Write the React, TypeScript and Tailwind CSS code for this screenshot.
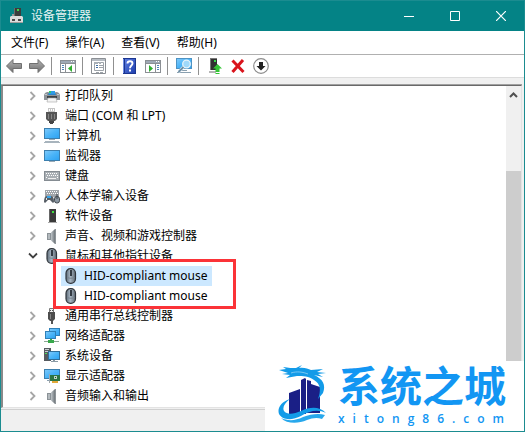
import type { ReactNode } from "react";

function Svg({ children, w = 16, h = 16 }: { children: ReactNode; w?: number; h?: number }) {
  return (
    <svg width={w} height={h} viewBox={`0 0 ${w} ${h}`} className="block shrink-0" aria-hidden="true">
      {children}
    </svg>
  );
}

const Chevron = ({ open }: { open?: boolean }) => (
  <Svg w={10} h={10}>
    {open ? (
      <path d="M1 2.5 5 6.5 9 2.5" fill="none" stroke="#404040" strokeWidth="1.8" />
    ) : (
      <path d="M2.5 1 6.5 5 2.5 9" fill="none" stroke="#a6a6a6" strokeWidth="1.8" />
    )}
  </Svg>
);

const Defs = () => (
  <svg width="0" height="0" className="absolute" aria-hidden="true">
    <defs>
      <linearGradient id="screen" x1="0" y1="0" x2="1" y2="1">
        <stop offset="0" stopColor="#7cc8fa" />
        <stop offset="0.5" stopColor="#4ab4f8" />
        <stop offset="1" stopColor="#2ea3f2" />
      </linearGradient>
      <linearGradient id="arrow" x1="0" y1="0" x2="0" y2="1">
        <stop offset="0" stopColor="#b5b5b5" />
        <stop offset="1" stopColor="#6e6e6e" />
      </linearGradient>
      <linearGradient id="metal" x1="0" y1="0" x2="1" y2="0">
        <stop offset="0" stopColor="#5d6a76" />
        <stop offset="0.45" stopColor="#a9b7c4" />
        <stop offset="1" stopColor="#5f6a74" />
      </linearGradient>
      <linearGradient id="cone" x1="0" y1="0" x2="1" y2="0">
        <stop offset="0" stopColor="#bfc5c9" />
        <stop offset="1" stopColor="#70777c" />
      </linearGradient>
      <linearGradient id="help" x1="0" y1="0" x2="1" y2="1">
        <stop offset="0" stopColor="#5a7be0" />
        <stop offset="1" stopColor="#1f3fae" />
      </linearGradient>
    </defs>
  </svg>
);

const AppIcon = () => (
  <Svg w={14} h={16}>
    <path d="M5 0h7v9H5z" fill="#3c3c3c" />
    <path d="M5 0h1v9H5z" fill="#6b6b6b" />
    <path d="M8 1h2v2H8z" fill="#3ddb4a" />
    <path d="M3 6h2v2H3z" fill="#9a9a9a" />
    <path d="M1 9l1-1h11l1 1v6H1z" fill="#dcdcdc" />
    <path d="M1 14h13v1H1z" fill="#9d9d9d" />
    <path d="M3 11h3v2H3zM9 11h3v2H9z" fill="#4a4a4a" />
  </Svg>
);

const ArrowIcon = ({ right }: { right?: boolean }) => (
  <Svg>
    <path
      d={right ? "M15.5 8 9 1.5v4H.5v5H9v4z" : "M.5 8 7 1.5v4h8.500v5H7v4z"}
      fill="url(#arrow)"
      stroke="#707070"
      strokeWidth="1"
      strokeLinejoin="round"
    />
  </Svg>
);

const PaneIcon = ({ right }: { right?: boolean }) => (
  <Svg>
    <path d="M0 2h16v13H0z" fill="#8b8f94" />
    <path d="M1 3h14v2H1z" fill="#9fa9b5" />
    <path d="M11 3h1v1h-1zM13 3h1v1h-1z" fill="#fff" />
    <path d="M1 6h14v8H1z" fill="#fff" />
    <path d={right ? "M10 6h1v8h-1z" : "M5 6h1v8H5z"} fill="#8b8f94" />
    <path d={right ? "M12 7h2v1h-2zm0 2h2v1h-2zm0 2h2v1h-2z" : "M2 7h2v1H2zm0 2h2v1H2zm0 2h2v1H2z"} fill="#4f84b8" />
    <path d={right ? "M4 7v7l4-3.500z" : "M12 7v7L8 10.500z"} fill="#2fae2f" />
  </Svg>
);

const PropertiesIcon = () => (
  <Svg>
    <path d="M.5.5h14v15H.5z" fill="#fff" stroke="#8b8f94" />
    <path d="M1 1h13v2H1z" fill="#b6bcc3" />
    <path d="M3.500 4.500h9v8h-9z" fill="#fff" stroke="#9da3a9" />
    <path d="M3 4h4v2H3zM8 4h2v2H8z" fill="#a8afb6" />
    <path d="M5 7h2v1H5zM5 9h2v1H5z" fill="#3f6ea5" />
    <path d="M8 7h4v1H8zM8 9h4v1H8z" fill="#9da3a9" />
    <path d="M5 14h3v1H5zM9 14h3v1H9z" fill="#9da3a9" />
  </Svg>
);

const HelpIcon = () => (
  <Svg>
    <path d="M1 0h13v16H1z" fill="#1b3690" />
    <path d="M3 1h10v14H3z" fill="url(#help)" />
    <path d="M1 1h1v14H1z" fill="#6f8be0" />
    <path d="M5.500 5.500C5.500 2.500 10.500 2.500 10.500 5.500 10.500 7.500 8 7.500 8 10.200" fill="none" stroke="#fff" strokeWidth="1.900" />
    <path d="M7 11.500h2v2H7z" fill="#fff" />
  </Svg>
);

const ScanIcon = () => (
  <Svg>
    <path d="M0 0h16v11H0z" fill="#4d93c4" />
    <path d="M1 1h14v9H1z" fill="url(#screen)" />
    <path d="M5 12h6v1H5zM1 14h14v1H1z" fill="#8aa0b0" />
    <circle cx="10.500" cy="6" r="3.800" fill="#9fd8fa" stroke="#e7f3fa" strokeWidth="1.300" />
    <path d="m7.500 9-5 5" stroke="#e7f3fa" strokeWidth="3" />
    <path d="m7.500 9-5 5" stroke="#6f8ea4" strokeWidth="1.800" />
  </Svg>
);

const UpdateIcon = () => (
  <Svg>
    <path d="M3 0h7v12H3z" fill="#303030" />
    <path d="M3 0h1v12H3zM3 0h7v1H3z" fill="#777" />
    <path d="M7 2h2v2H7z" fill="#38d648" />
    <path d="M2 13h7v2H2z" fill="#b5b5b5" />
    <path d="M10.500 6 6 10.500h2.500V13h4v-2.500H15z" fill="#35c435" />
    <path d="M8.500 13h4v1h-4zM8.500 15h4v1h-4z" fill="#35c435" />
  </Svg>
);

const RemoveIcon = () => (
  <Svg>
    <path d="M2.500 2.500 13.500 14M13 2 2.500 14" stroke="#d9141c" strokeWidth="3" fill="none" />
  </Svg>
);

const DisableIcon = () => (
  <Svg>
    <circle cx="8" cy="8" r="7.300" fill="#fff" stroke="#8c8c8c" strokeWidth="1.200" />
    <path d="M6 4h4v4h2.500L8 12.500 3.500 8H6z" fill="#222" />
  </Svg>
);

const Printer = () => (
  <Svg>
    <path d="M3 5h10v4H3z" fill="#2d86c8" />
    <path d="M5 3h6v3H5z" fill="#2d9be8" />
    <path d="M5 3h2v2H5z" fill="#35c768" />
    <path d="m1 5 2-1h2L4 7h8l-1-3h2l2 1 1 2v5H0V7z" fill="#8d9398" />
    <path d="M1 6h2v1H1zM13 6h2v1h-2z" fill="#c4c9cd" />
    <path d="M3 8h10v2H3z" fill="#3d4246" />
    <path d="M4 10h8l1 4H3z" fill="#f4f4f4" stroke="#a6a6a6" strokeWidth=".6" />
  </Svg>
);

const Port = () => (
  <Svg>
    <path d="M2 4h11v7l-2 2H4l-2-2z" fill="#555" />
    <path d="M4 0h7v4H4z" fill="#c4c4c4" />
    <path d="M5 1h1v2H5zM7 1h1v2H7zM9 1h1v2H9z" fill="#fff" />
    <path d="M4 6h1v5H4zM7 6h1v5H7zM10 6h1v5h-1z" fill="#858585" />
    <path d="M5 13h5v2H5zM6 15h3v1H6z" fill="#454545" />
  </Svg>
);

const Monitor = ({ base }: { base?: boolean }) => (
  <Svg>
    <g transform={base ? "" : "translate(0 2)"}>
      <path d="M0 0h16v11H0z" fill="#3c7fae" />
      <path d="M1 1h14v9H1z" fill="url(#screen)" />
      <path d="M5 11h6v1H5z" fill="#9aaab6" />
    </g>
    {base && <path d="M1 13h14v1H1zM0 14h16v1H0z" fill="#a8b4bd" />}
  </Svg>
);

const Keyboard = () => (
  <Svg>
    <path d="M0 3h16v10H0z" fill="#858c92" />
    <path d="M1 4h14v8H1z" fill="#a9afb4" />
    <path d="M2 5.500h12M3 7.500h11M2 9.500h1M13 9.500h1" stroke="#fff" strokeDasharray="1 1" />
    <path d="M4 10.500h8" stroke="#eee" />
  </Svg>
);

const Hid = () => (
  <Svg>
    <path d="M1 2h14v7H1z" fill="#a0a5aa" />
    <path d="M2 3.500h12M3 5.500h11" stroke="#fff" strokeDasharray="1 1" />
    <path d="M0 14c0-4 1-6 3-6l2 1 2-1c2 0 3 2 3 6l-1 1-3-3H4l-3 3z" fill="#555d65" />
    <path d="M3 8h4v2H3z" fill="#38a4e8" />
    <path d="M2 10h1v2H2z" fill="#dce3e8" />
    <rect x="10.500" y="8.500" width="5" height="6.500" rx="2.300" fill="#8b97a2" stroke="#3f464d" />
    <path d="M12.500 6h1v5h-1z" fill="#3f464d" />
  </Svg>
);

const Software = () => (
  <Svg>
    <path d="M5 1h7v13H5z" fill="#3a3a3a" />
    <path d="M5 1h1v13H5z" fill="#666" />
    <path d="M8 3h2v2H8z" fill="#3fe03f" />
    <path d="M4 14h9v1H4z" fill="#a9a9a9" />
  </Svg>
);

const Speaker = () => (
  <Svg>
    <path d="M3 5h4v7H3z" fill="#8b9297" />
    <path d="M4 6h2v5H4z" fill="#b4babe" />
    <path d="M7 4.500 11 1v15l-4-3.500z" fill="url(#cone)" />
    <path d="M11 1h1v15h-1z" fill="#8e9498" />
  </Svg>
);

const Mouse = () => (
  <Svg>
    <rect x="3" y=".7" width="9.500" height="14.600" rx="4.500" fill="url(#metal)" stroke="#30363c" strokeWidth="1.200" />
    <path d="M7 2h2v6H7z" fill="#333b43" />
    <path d="M4.500 9.500c2 1 5 1 7 0" fill="none" stroke="#79858f" />
  </Svg>
);

const Usb = () => (
  <Svg>
    <path d="M5.500 0.500h4v4h-4z" fill="#f0f0f0" stroke="#777" />
    <path d="M6 2h1v1H6zM8 2h1v1H8z" fill="#555" />
    <path d="M4 4h7v7l-2 2H6l-2-2z" fill="#4d4d4d" />
    <path d="M6 6h1v5H6z" fill="#858585" />
    <path d="M7 13h2v3H7z" fill="#555" />
  </Svg>
);

const Network = () => (
  <Svg>
    <path d="M5 0h11v8H5z" fill="#2f80b8" />
    <path d="M6 1h9v6H6z" fill="url(#screen)" />
    <path d="M1 3h11v8H1z" fill="#2f80b8" />
    <path d="M2 4h9v6H2z" fill="url(#screen)" />
    <path d="M0 13h15v1H0z" fill="#8ca694" />
    <path d="M6 11h2v2H6zM4 12h6v3H4z" fill="#37a84a" />
  </Svg>
);

const System = () => (
  <Svg>
    <path d="M0 0h7v13H0z" fill="#565b60" />
    <path d="M1 1h4v1H1zM1 3h4v1H1z" fill="#c7cccf" />
    <path d="M1 5h2v1H1z" fill="#4dd85a" />
    <path d="M4 3h12v9H4z" fill="#2f6e9a" />
    <path d="M5 4h10v7H5z" fill="url(#screen)" />
    <path d="M9 12h2v1H9zM7 13h7v1H7z" fill="#8b9ba6" />
  </Svg>
);

const Display = () => (
  <Svg>
    <path d="M0 1h16v10H0z" fill="#3c7fae" />
    <path d="M1 2h14v8H1z" fill="url(#screen)" />
    <path d="M3 12h3v1H3z" fill="#8aa0b0" />
    <path d="M6 7h10v6H6z" fill="#2c7544" />
    <path d="M10 8h3v3h-3z" fill="#bcd6c4" />
    <path d="M11 9h1v1h-1z" fill="#24472f" />
    <path d="M5 6h1v9H5z" fill="#9ea6aa" />
    <path d="M8 13h6v2H8z" fill="#e2a93a" />
  </Svg>
);

type Device = { name: string; icon: ReactNode; children?: string[] };

const devices: Device[] = [
  { name: "打印队列", icon: <Printer /> },
  { name: "端口 (COM 和 LPT)", icon: <Port /> },
  { name: "计算机", icon: <Monitor base /> },
  { name: "监视器", icon: <Monitor /> },
  { name: "键盘", icon: <Keyboard /> },
  { name: "人体学输入设备", icon: <Hid /> },
  { name: "软件设备", icon: <Software /> },
  { name: "声音、视频和游戏控制器", icon: <Speaker /> },
  { name: "鼠标和其他指针设备", icon: <Mouse />, children: ["HID-compliant mouse", "HID-compliant mouse"] },
  { name: "通用串行总线控制器", icon: <Usb /> },
  { name: "网络适配器", icon: <Network /> },
  { name: "系统设备", icon: <System /> },
  { name: "显示适配器", icon: <Display /> },
  { name: "音频输入和输出", icon: <Speaker /> },
];

const toolGroups: { label: string; icon: ReactNode }[][] = [
  [
    { label: "后退", icon: <ArrowIcon /> },
    { label: "前进", icon: <ArrowIcon right /> },
  ],
  [{ label: "显示/隐藏控制台树", icon: <PaneIcon /> }],
  [{ label: "属性", icon: <PropertiesIcon /> }],
  [
    { label: "帮助", icon: <HelpIcon /> },
    { label: "显示/隐藏操作窗格", icon: <PaneIcon right /> },
  ],
  [{ label: "扫描检测硬件改动", icon: <ScanIcon /> }],
  [
    { label: "更新驱动程序", icon: <UpdateIcon /> },
    { label: "卸载设备", icon: <RemoveIcon /> },
    { label: "禁用设备", icon: <DisableIcon /> },
  ],
];

function TitleBar() {
  return (
    <header className="flex h-[30px] items-center bg-[#048386] pl-2 text-white">
      <AppIcon />
      <h1 className="ml-2 flex-1 text-[#e6f3f3]">设备管理器</h1>
      <button aria-label="最小化" className="flex h-full w-[46px] items-center justify-center">
        <Svg w={10} h={10}>
          <path d="M0 5h10v1H0z" fill="#fff" />
        </Svg>
      </button>
      <button aria-label="最大化" className="flex h-full w-[46px] items-center justify-center">
        <Svg w={10} h={10}>
          <path d="M.5.5h9v9h-9z" fill="none" stroke="#fff" />
        </Svg>
      </button>
      <button aria-label="关闭" className="flex h-full w-[46px] items-center justify-center">
        <Svg w={10} h={10}>
          <path d="m0 0 10 10M10 0 0 10" stroke="#fff" strokeWidth="1.200" />
        </Svg>
      </button>
    </header>
  );
}

function Tree() {
  return (
    <ul role="tree" className="min-w-0 flex-1 pl-[25px]">
      {devices.map((d) => (
        <li key={d.name} role="treeitem" aria-expanded={!!d.children}>
          <div className="flex h-5 items-center">
            <button aria-label="展开" className="w-4">
              <Chevron open={!!d.children} />
            </button>
            {d.icon}
            <span className="ml-[5px] whitespace-nowrap">{d.name}</span>
          </div>
          {d.children && (
            <ul role="group" className="relative pl-[33px]">
              {d.children.map((c, i) => (
                <li
                  key={i}
                  role="treeitem"
                  aria-selected={i === 0}
                  className="flex h-5 w-fit items-center pr-[5px] pl-[2px] aria-selected:bg-[#cce8ff]"
                >
                  <Mouse />
                  <span className="ml-[5px] whitespace-nowrap">{c}</span>
                </li>
              ))}
              <li role="presentation" className="absolute -top-[7px] left-[25px] h-[50px] w-[183px] border-[3px] border-[#fb3338]" />
            </ul>
          )}
        </li>
      ))}
    </ul>
  );
}

function Watermark() {
  return (
    <aside className="absolute right-0 bottom-0 flex h-[70px] w-[259px] bg-white pt-[3px] pl-[13px]">
      <Svg w={52} h={64}>
        <path d="M11 29 22 25v26H11zM23 16l4-2 1 1v35h-5zM29 16l4 1v3l9 3v26H29z" fill="#1a1f86" />
        <path d="M1 5 8 4 5 2c6 1 9 1 13 1l6-3-3 3c5-1 9 1 12 2l12-1-6 3 9 1-8 1 5 3-9-2c9 4 12 10 9 18l-5 6c3-8 3-15-4-19-5-4-11-4-17-4l-11 2 4-3-8-1 6-1z" fill="#139be8" transform="translate(0 1)" />
        <path d="M13 9c6-2 12-1 17 1" fill="none" stroke="#8fd0f5" strokeWidth=".8" />
        <path d="M12 35C3 38-1 44 1 50c4 7 14 6 22 2 8-5 17-7 25-3-7-7-16-6-25-2-7 3-14 4-17 0-2-4 1-8 6-12z" fill="#139be8" />
        <path d="M3 54c7 3 14 3 22-1 8-3 16-4 22-2l-3 4c-5-2-10-1-15 1-9 4-20 4-26-2z" fill="#28a8ec" />
      </Svg>
      <div className="ml-2 flex flex-col text-[#1296f3]">
        <strong className="font-['Liberation_Sans','Noto_Sans_CJK_SC',sans-serif] text-[42px] leading-[48px]">系统之城</strong>
        <span className="font-['Open_Sans',sans-serif] text-[12px] leading-[14px] font-semibold tracking-[8px]">xitong86.com</span>
      </div>
    </aside>
  );
}

export default function App() {
  return (
    <main className="relative flex min-h-screen flex-col border border-[#1b8c90] bg-[#f0f0f0] font-['Noto_Sans','Noto_Sans_CJK_SC',sans-serif] text-[12px] leading-5 text-black">
      <Defs />
      <TitleBar />
      <nav className="flex h-6 items-center gap-px border-b border-[#b0b0b0] bg-white pl-[2px]">
        {["文件(F)", "操作(A)", "查看(V)", "帮助(H)"].map((m) => (
          <button key={m} className="px-2">
            {m}
          </button>
        ))}
      </nav>
      <div role="toolbar" className="flex h-[23px] items-center border-b border-[#dcdcdc] bg-white pl-[2px]">
        {toolGroups.map((g, i) => (
          <div key={i} className="flex items-center">
            {i > 0 && <span className="mr-[5px] ml-[2px] h-[18px] w-px bg-[#909090]" />}
            {g.map((t) => (
              <button key={t.label} aria-label={t.label} className="w-[23px] pl-[3px]">
                {t.icon}
              </button>
            ))}
          </div>
        ))}
      </div>
      <section className="mt-[6px] mr-[2px] flex flex-1 border-t border-[#a0a0a0] bg-white">
        <div className="flex flex-1 border-t border-r border-b border-l-2 border-t-[#696969] border-r-[#e3e3e3] border-b-[#e3e3e3] border-l-[#8a8a8a]">
          <Tree />
          <div className="flex w-[15px] flex-col bg-[#f0f0f0]">
            <button aria-label="向上滚动" className="flex h-[18px] items-center justify-center">
              <Svg w={9} h={6}>
                <path d="M1 5 4.500 1.500 8 5" fill="none" stroke="#505050" strokeWidth="2" />
              </Svg>
            </button>
            <div className="mt-[67px] flex-1 bg-[#cdcdcd]" />
          </div>
        </div>
      </section>
      <footer className="mt-px h-[22px] border-t border-[#d0d0d0]" />
      <Watermark />
    </main>
  );
}
